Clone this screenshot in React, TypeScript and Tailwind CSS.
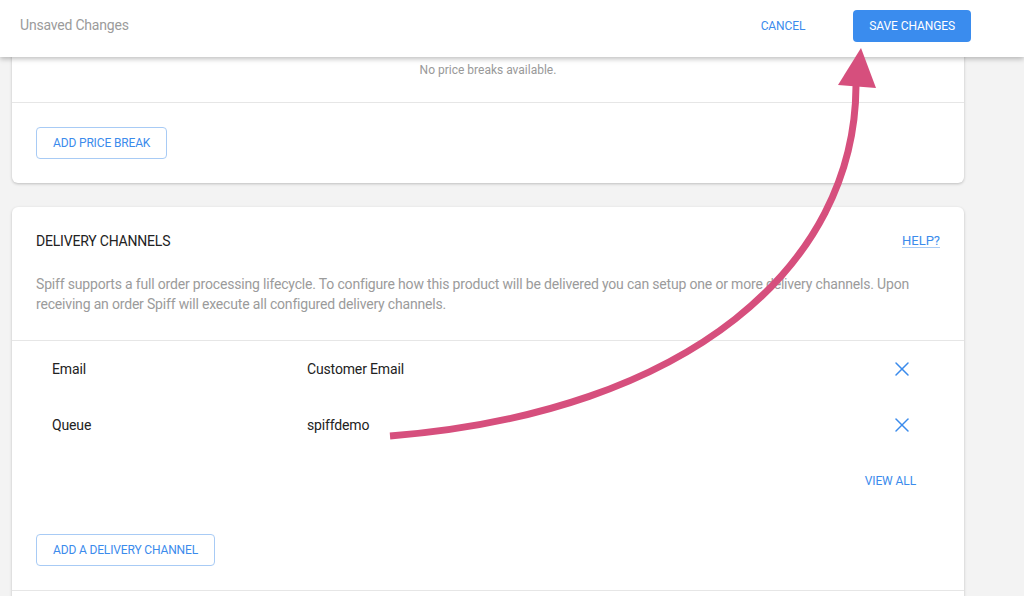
import { X } from 'lucide-react';

const channels = [
  { type: 'Email', target: 'Customer Email' },
  { type: 'Queue', target: 'spiffdemo' },
];

function OutlineButton({ label }: { label: string }) {
  return (
    <button className="h-8 px-4 rounded border border-[#a8cbf5] text-[12px] text-[#3b8bec] uppercase tracking-[-0.15px] bg-white">
      {label}
    </button>
  );
}

export default function App() {
  return (
    <div className="relative h-[596px] overflow-hidden bg-[#f3f3f3] font-['Roboto',sans-serif]">
      {/* sticky save bar */}
      <header className="absolute top-0 left-0 right-0 z-10 h-[57px] bg-white shadow-[0_2px_5px_rgba(0,0,0,0.25)] flex items-center pb-[6px] pl-5 pr-[53px]">
        <span className="text-[14px] text-[#9b9b9b] tracking-[-0.2px]">Unsaved Changes</span>
        <div className="ml-auto flex items-center gap-12">
          <button className="text-[12px] text-[#3b8bec] uppercase tracking-[-0.1px]">Cancel</button>
          <button className="h-8 px-4 rounded bg-[#3a8cee] text-white text-[12px] uppercase tracking-[-0.1px]">
            Save Changes
          </button>
        </div>
      </header>

      <main className="pl-3 w-[964px] flex flex-col gap-6">
        {/* price breaks card (scrolled under header) */}
        <section className="bg-white rounded-b-md shadow-[0_1px_3px_rgba(0,0,0,0.22)]">
          <div className="h-[102px] flex items-end justify-center pb-6">
            <span className="text-[12px] leading-4 text-[#999]">No price breaks available.</span>
          </div>
          <div className="border-t border-[#e6e6e6] px-6 py-6">
            <OutlineButton label="Add Price Break" />
          </div>
        </section>

        {/* delivery channels card */}
        <section className="bg-white rounded-md shadow-[0_1px_3px_rgba(0,0,0,0.22)]">
          <div className="px-6 pt-6 pb-[26px]">
            <div className="flex items-center justify-between">
              <h2 className="text-[14px] leading-5 text-[#222] uppercase tracking-[-0.2px]">Delivery Channels</h2>
              <a className="text-[13px] leading-5 text-[#3b8bec] underline decoration-[#a8cbf5] underline-offset-2">HELP?</a>
            </div>
            <p className="mt-[23px] text-[14px] leading-5 text-[#9b9b9b] tracking-[-0.18px]">
              Spiff supports a full order processing lifecycle. To configure how this product will be delivered you can setup one or more delivery channels. Upon receiving an order Spiff will execute all configured delivery channels.
            </p>
          </div>
          <div className="border-t border-[#e6e6e6]">
            {channels.map((c) => (
              <div key={c.type} className="h-14 flex items-center pl-10 pr-[50px] text-[14px] text-[#222] tracking-[-0.15px]">
                <span className="w-[255px]">{c.type}</span>
                <span className="flex-1">{c.target}</span>
                <X size={24} strokeWidth={1.5} className="text-[#3b8bec]" />
              </div>
            ))}
            <div className="mt-5 flex justify-end pr-12">
              <button className="text-[12px] leading-4 text-[#3b8bec] uppercase tracking-[-0.1px]">View All</button>
            </div>
            <div className="px-6 pt-[45px] pb-6">
              <OutlineButton label="Add a Delivery Channel" />
            </div>
          </div>
          <div className="border-t border-[#e6e6e6] h-10" />
        </section>
      </main>

      {/* annotation arrow */}
      <svg className="absolute inset-0 z-20 pointer-events-none" width="1024" height="596" viewBox="0 0 1024 596">
        <path d="M390 436 C690 412 855 265 856 86" fill="none" stroke="#d64f7d" strokeWidth="7" />
        <polygon points="861,48 838,85 876,88" fill="#d64f7d" />
      </svg>
    </div>
  );
}
